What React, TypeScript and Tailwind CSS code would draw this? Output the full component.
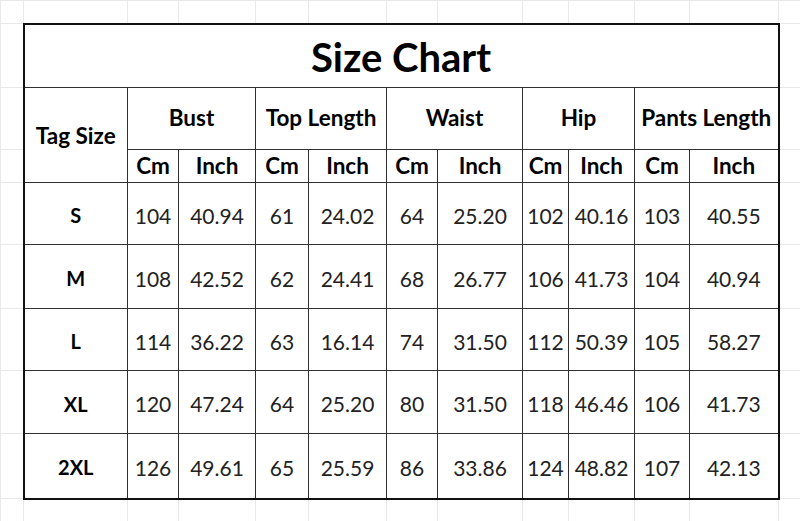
import React from "react";

const colWidths = [23, 104, 51, 77, 53, 78, 51, 85, 46, 66, 55, 89, 23];
const groups = ["Bust", "Top Length", "Waist", "Hip", "Pants Length"];
const rows: [string, string[]][] = [
  ["S", ["104", "40.94", "61", "24.02", "64", "25.20", "102", "40.16", "103", "40.55"]],
  ["M", ["108", "42.52", "62", "24.41", "68", "26.77", "106", "41.73", "104", "40.94"]],
  ["L", ["114", "36.22", "63", "16.14", "74", "31.50", "112", "50.39", "105", "58.27"]],
  ["XL", ["120", "47.24", "64", "25.20", "80", "31.50", "118", "46.46", "106", "41.73"]],
  ["2XL", ["126", "49.61", "65", "25.59", "86", "33.86", "124", "48.82", "107", "42.13"]],
];
const rowHeights = ["h-[62px]", "h-[64px]", "h-[62px]", "h-[63px]", "h-[65px]"];

const M = "border border-[#e8e8e8] p-0";
const C = "border border-[#303030] p-0 text-center align-middle";

function MarginRow({ h }: { h: string }) {
  return (
    <tr className={h}>
      {colWidths.map((_, i) => (
        <td key={i} className={M} />
      ))}
    </tr>
  );
}

export default function App() {
  return (
    <div
      className="w-[800px] h-[521px] bg-white overflow-hidden"
      style={{ fontFamily: "Lato, 'Open Sans', sans-serif" }}
    >
      <table className="w-[800px] table-fixed border-collapse">
        <colgroup>
          {colWidths.map((w, i) => (
            <col key={i} style={{ width: w }} />
          ))}
        </colgroup>
        <tbody>
          <MarginRow h="h-[23px]" />
          <tr className="h-[64px]">
            <td className={M} />
            <td
              colSpan={11}
              className={`${C} border-t-2 border-l-2 border-r-2 border-t-[#111] border-l-[#111] border-r-[#111] text-[40px] font-bold text-black leading-none pt-[3px]`}
            >
              Size Chart
            </td>
            <td className={M} />
          </tr>
          <tr className="h-[62px]">
            <td className={M} />
            <td
              rowSpan={2}
              className={`${C} border-l-2 border-l-[#111] text-[22.5px] font-bold text-black leading-none pt-[2px]`}
            >
              Tag Size
            </td>
            {groups.map((g, i) => (
              <td
                key={g}
                colSpan={2}
                className={`${C} text-[22.5px] font-bold text-black leading-none ${
                  i === groups.length - 1 ? "border-r-2 border-r-[#111]" : ""
                }`}
              >
                {g}
              </td>
            ))}
            <td className={M} />
          </tr>
          <tr className="h-[33px]">
            <td className={M} />
            {groups.map((g, i) => (
              <React.Fragment key={g}>
                <td className={`${C} text-[22.5px] font-bold text-black leading-none pt-[1px]`}>Cm</td>
                <td
                  className={`${C} text-[22.5px] font-bold text-black leading-none pt-[1px] ${
                    i === groups.length - 1 ? "border-r-2 border-r-[#111]" : ""
                  }`}
                >
                  Inch
                </td>
              </React.Fragment>
            ))}
            <td className={M} />
          </tr>
          {rows.map(([size, vals], ri) => {
            const last = ri === rows.length - 1;
            const bottom = last ? "border-b-2 border-b-[#111]" : "";
            return (
              <tr key={size} className={rowHeights[ri]}>
                <td className={M} />
                <td
                  className={`${C} border-l-2 border-l-[#111] ${bottom} text-[20px] font-bold text-black leading-none pt-[3px]`}
                >
                  {size}
                </td>
                {vals.map((v, vi) => (
                  <td
                    key={vi}
                    className={`${C} ${bottom} ${
                      vi === vals.length - 1 ? "border-r-2 border-r-[#111]" : ""
                    } text-[21px] text-[#222] leading-none pt-[3px]`}
                  >
                    {v}
                  </td>
                ))}
                <td className={M} />
              </tr>
            );
          })}
          <MarginRow h="h-[23px]" />
        </tbody>
      </table>
    </div>
  );
}
